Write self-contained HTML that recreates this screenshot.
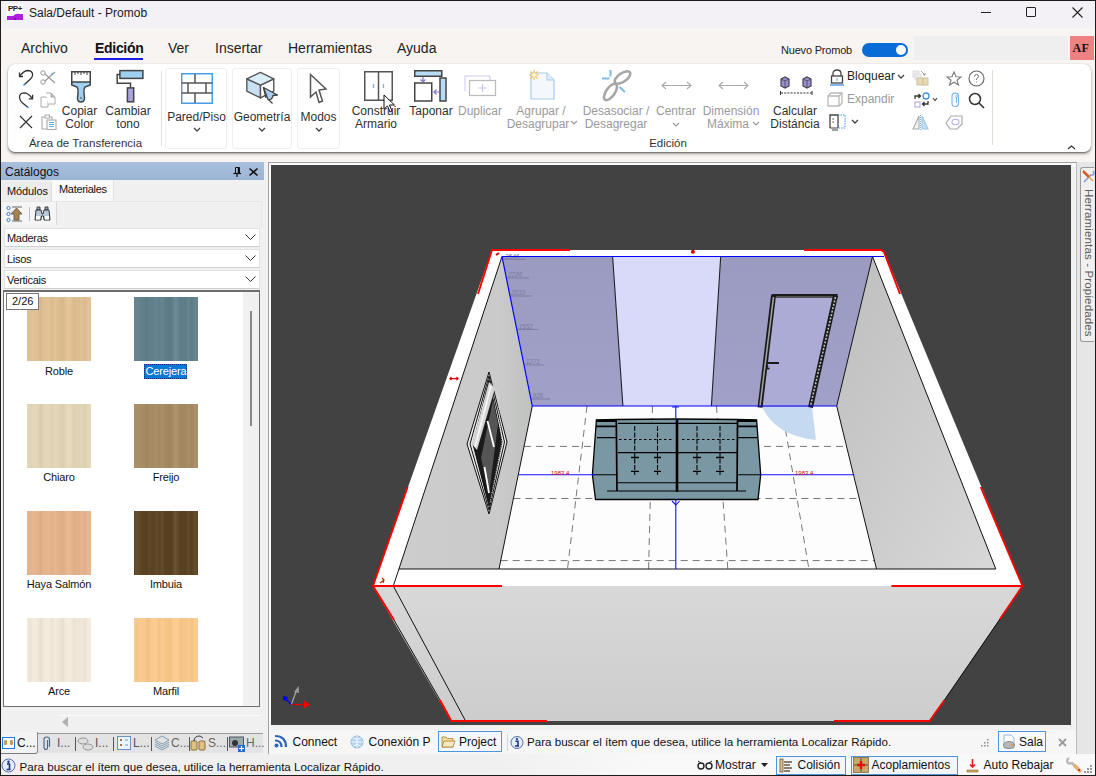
<!DOCTYPE html>
<html><head><meta charset="utf-8">
<style>
*{box-sizing:border-box}
html,body{margin:0;padding:0}
body{width:1096px;height:776px;overflow:hidden;position:relative;background:#f7f4f1;font-family:"Liberation Sans",sans-serif;color:#1a1a1a}
.a{position:absolute}
.t{position:absolute;white-space:nowrap;line-height:1}
.rb{position:absolute;font-size:12px;color:#303030;text-align:center;line-height:13px;white-space:nowrap}
.g{color:#9a9a9a}
svg{position:absolute;overflow:visible}
</style></head><body>
<!-- title bar -->
<div class="a" style="left:0;top:0;width:1096px;height:28px;background:#f3f0f6"></div>
<div class="a" style="left:7px;top:4px;width:16px;height:16px;background:#fff"></div>
<div class="t" style="left:8px;top:5px;font-size:8px;font-weight:bold;color:#222;letter-spacing:-0.5px">PP+</div>
<svg style="left:7px;top:13px" width="16" height="7"><path d="M0 3 L6 3 Q9 0 12 1 L16 1 L16 7 L0 7Z" fill="#b01fe0"/><path d="M7 7 L8 4 L9 7Z" fill="#5a1070"/></svg>
<div class="t" style="left:29px;top:7px;font-size:12px;color:#1a1a1a">Sala/Default - Promob</div>
<!-- window controls -->
<div class="a" style="left:981px;top:12px;width:10px;height:1px;background:#222"></div>
<div class="a" style="left:1026px;top:7px;width:10px;height:10px;border:1px solid #222;border-radius:1px"></div>
<svg style="left:1072px;top:7px" width="11" height="11"><path d="M0.5 0.5 L10.5 10.5 M10.5 0.5 L0.5 10.5" stroke="#222" stroke-width="1.1"/></svg>
<!-- menu bar -->
<div class="t" style="left:21px;top:41px;font-size:14px;color:#222">Archivo</div>
<div class="t" style="left:95px;top:41px;font-size:14px;font-weight:bold;color:#111;letter-spacing:-0.3px">Edición</div>
<div class="a" style="left:94px;top:58px;width:49px;height:2px;background:#1a1ae6"></div>
<div class="t" style="left:168px;top:41px;font-size:14px;color:#222">Ver</div>
<div class="t" style="left:215px;top:41px;font-size:14px;color:#222">Insertar</div>
<div class="t" style="left:288px;top:41px;font-size:14px;color:#222">Herramientas</div>
<div class="t" style="left:397px;top:41px;font-size:14px;color:#222">Ayuda</div>
<div class="t" style="left:781px;top:44.7px;font-size:11px;color:#222;letter-spacing:-0.2px">Nuevo Promob</div>
<div class="a" style="left:862px;top:43px;width:46px;height:14px;background:#0a6cd6;border-radius:7px"></div>
<div class="a" style="left:896px;top:45px;width:10px;height:10px;background:#fff;border-radius:5px"></div>
<div class="a" style="left:914px;top:36px;width:154px;height:24px;background:#f0efef"></div>
<div class="a" style="left:1070px;top:36px;width:24px;height:24px;background:#ee8181"></div>
<div class="t" style="left:1072.5px;top:41.5px;font-family:'Liberation Serif',serif;font-size:12px;font-weight:bold;color:#111;letter-spacing:0.3px">AF</div>
<!-- ribbon panel -->
<div class="a" style="left:8px;top:64px;width:1083px;height:88px;background:#fff;border-radius:7px;box-shadow:0 2px 3px rgba(0,0,0,0.35),0 0.5px 1px rgba(0,0,0,0.3)"></div>
<!-- ===== Catalogos panel ===== -->
<div class="a" style="left:1px;top:162px;width:263px;height:18px;background:linear-gradient(#a9c0dd,#9cb4d4)"></div>
<div class="t" style="left:5px;top:165.5px;font-size:12px;color:#111">Catálogos</div>
<svg style="left:233px;top:167px" width="9" height="10"><path d="M2.5 0.5 H6.5 V6" fill="none" stroke="#111" stroke-width="1"/><path d="M2.5 0.5 V6" stroke="#111" stroke-width="1"/><path d="M5.5 0.5 V6" stroke="#111" stroke-width="1.5"/><path d="M0.5 6.5 H8" stroke="#111" stroke-width="1.2"/><path d="M4 7 V10" stroke="#111" stroke-width="1.2"/></svg>
<svg style="left:249px;top:168px" width="9" height="8"><path d="M0.5 0.5 L8.5 7.5 M8.5 0.5 L0.5 7.5" stroke="#111" stroke-width="1.6"/></svg>
<div class="a" style="left:1px;top:180px;width:263px;height:553px;background:#f0f0f0"></div>
<div class="a" style="left:2px;top:182px;width:50px;height:19px;background:#ececec;border-right:1px solid #dcdcdc"></div>
<div class="a" style="left:52px;top:180px;width:62px;height:22px;background:#f9f9f9;border-right:1px solid #e2e2e2"></div>
<div class="t" style="left:7px;top:186px;font-size:11px;color:#111;letter-spacing:-0.1px">Módulos</div>
<div class="t" style="left:59px;top:184px;font-size:11px;color:#111;letter-spacing:-0.3px">Materiales</div>
<div class="a" style="left:2px;top:201px;width:260px;height:26px;background:#f0f0f0;border-top:1px solid #e6e6e6;border-right:1px solid #e6e6e6"></div>
<div class="a" style="left:3px;top:202px;width:54px;height:23px;background:#f5f5f5;border-right:1px solid #d8d8d8"></div>
<svg style="left:6px;top:206px" width="17" height="16"><circle cx="2.5" cy="2" r="1.6" fill="#fff" stroke="#2a6cc8" stroke-width="0.9"/><circle cx="2.5" cy="8" r="1.6" fill="#fff" stroke="#2a6cc8" stroke-width="0.9"/><circle cx="2.5" cy="14" r="1.6" fill="#fff" stroke="#2a6cc8" stroke-width="0.9"/><path d="M6 1 H16 M6 15 H16" stroke="#666"/><path d="M10.5 2 L16 8 H13 V14 H8 V8 H5Z" fill="#a9824e" stroke="#554" stroke-width="0.8"/></svg>
<div class="a" style="left:29px;top:207px;width:1px;height:14px;background:#bdbdbd"></div>
<svg style="left:34px;top:206px" width="17" height="16"><path d="M3 1 H6 V4 H3Z M11 1 H14 V4 H11Z" fill="#9ab" stroke="#333" stroke-width="0.9"/><path d="M2 4 H7 L8 8 H9 L10 4 H15 L16 14 H10 L9.5 10 H7.5 L7 14 H1Z" fill="#b8c8d8" stroke="#333" stroke-width="1"/><rect x="2" y="10" width="4" height="3.5" fill="#fff"/><rect x="11" y="10" width="4" height="3.5" fill="#fff"/></svg>
<!-- dropdowns -->
<div class="a" style="left:4px;top:228px;width:256px;height:19px;background:#fff;border:1px solid #e2e2e2;border-bottom-color:#cfcfcf"></div>
<div class="a" style="left:4px;top:249px;width:256px;height:19px;background:#fff;border:1px solid #e2e2e2;border-bottom-color:#cfcfcf"></div>
<div class="a" style="left:4px;top:270px;width:256px;height:19px;background:#fff;border:1px solid #e2e2e2;border-bottom-color:#cfcfcf"></div>
<div class="t" style="left:7px;top:232.5px;font-size:11px;color:#111;letter-spacing:-0.3px">Maderas</div>
<div class="t" style="left:7px;top:253.5px;font-size:11px;color:#111;letter-spacing:-0.3px">Lisos</div>
<div class="t" style="left:7px;top:274.5px;font-size:11px;color:#111;letter-spacing:-0.3px">Verticais</div>
<svg style="left:245px;top:234px" width="11" height="7"><path d="M0.5 0.5 L5.5 5.5 L10.5 0.5" fill="none" stroke="#333" stroke-width="1"/></svg>
<svg style="left:245px;top:255px" width="11" height="7"><path d="M0.5 0.5 L5.5 5.5 L10.5 0.5" fill="none" stroke="#333" stroke-width="1"/></svg>
<svg style="left:245px;top:276px" width="11" height="7"><path d="M0.5 0.5 L5.5 5.5 L10.5 0.5" fill="none" stroke="#333" stroke-width="1"/></svg>
<!-- list -->
<div class="a" style="left:3px;top:290px;width:257px;height:417px;background:#fff;border:1px solid #6e6e6e;border-top-width:2px"></div>
<div class="a" style="left:243px;top:292px;width:16px;height:414px;background:#f0f0f0"></div>
<div class="a" style="left:250px;top:311px;width:2px;height:115px;background:#8a8a8a"></div>
<div class="a" style="left:27px;top:297px;width:64px;height:64px;background:#e1c092;background-image:repeating-linear-gradient(90deg,rgba(255,255,255,0) 0px,rgba(255,255,255,0.06) 2px,rgba(255,255,255,0) 5px,rgba(255,255,255,0) 13px),repeating-linear-gradient(90deg,rgba(0,0,0,0) 0px,rgba(0,0,0,0.035) 3px,rgba(0,0,0,0) 6px,rgba(0,0,0,0) 11px),repeating-linear-gradient(90deg,rgba(255,255,255,0) 0px,rgba(255,255,255,0.05) 4px,rgba(255,255,255,0) 9px,rgba(0,0,0,0.025) 14px,rgba(255,255,255,0) 19px)"></div>
<div class="t" style="left:9px;top:365.5px;width:100px;text-align:center;font-size:11px;letter-spacing:-0.15px;color:#111">Roble</div>
<div class="a" style="left:134px;top:297px;width:64px;height:64px;background:#5f7f8b;background-image:repeating-linear-gradient(90deg,rgba(255,255,255,0) 0px,rgba(255,255,255,0.06) 2px,rgba(255,255,255,0) 5px,rgba(255,255,255,0) 13px),repeating-linear-gradient(90deg,rgba(0,0,0,0) 0px,rgba(0,0,0,0.035) 3px,rgba(0,0,0,0) 6px,rgba(0,0,0,0) 11px),repeating-linear-gradient(90deg,rgba(255,255,255,0) 0px,rgba(255,255,255,0.05) 4px,rgba(255,255,255,0) 9px,rgba(0,0,0,0.025) 14px,rgba(255,255,255,0) 19px)"></div>
<div class="a" style="left:144px;top:364px;width:43px;height:15px;background:#0a78d7;border:1px dotted #1a2a6a"></div>
<div class="t" style="left:116px;top:365.5px;width:100px;text-align:center;font-size:11px;letter-spacing:-0.15px;color:#fff">Cerejera</div>
<div class="a" style="left:27px;top:404px;width:64px;height:64px;background:#e4d6b7;background-image:repeating-linear-gradient(90deg,rgba(255,255,255,0) 0px,rgba(255,255,255,0.06) 2px,rgba(255,255,255,0) 5px,rgba(255,255,255,0) 13px),repeating-linear-gradient(90deg,rgba(0,0,0,0) 0px,rgba(0,0,0,0.035) 3px,rgba(0,0,0,0) 6px,rgba(0,0,0,0) 11px),repeating-linear-gradient(90deg,rgba(255,255,255,0) 0px,rgba(255,255,255,0.05) 4px,rgba(255,255,255,0) 9px,rgba(0,0,0,0.025) 14px,rgba(255,255,255,0) 19px)"></div>
<div class="t" style="left:9px;top:472px;width:100px;text-align:center;font-size:11px;letter-spacing:-0.15px;color:#111">Chiaro</div>
<div class="a" style="left:134px;top:404px;width:64px;height:64px;background:#a68a62;background-image:repeating-linear-gradient(90deg,rgba(255,255,255,0) 0px,rgba(255,255,255,0.06) 2px,rgba(255,255,255,0) 5px,rgba(255,255,255,0) 13px),repeating-linear-gradient(90deg,rgba(0,0,0,0) 0px,rgba(0,0,0,0.035) 3px,rgba(0,0,0,0) 6px,rgba(0,0,0,0) 11px),repeating-linear-gradient(90deg,rgba(255,255,255,0) 0px,rgba(255,255,255,0.05) 4px,rgba(255,255,255,0) 9px,rgba(0,0,0,0.025) 14px,rgba(255,255,255,0) 19px)"></div>
<div class="t" style="left:116px;top:472px;width:100px;text-align:center;font-size:11px;letter-spacing:-0.15px;color:#111">Freijo</div>
<div class="a" style="left:27px;top:511px;width:64px;height:64px;background:#e7b38b;background-image:repeating-linear-gradient(90deg,rgba(255,255,255,0) 0px,rgba(255,255,255,0.06) 2px,rgba(255,255,255,0) 5px,rgba(255,255,255,0) 13px),repeating-linear-gradient(90deg,rgba(0,0,0,0) 0px,rgba(0,0,0,0.035) 3px,rgba(0,0,0,0) 6px,rgba(0,0,0,0) 11px),repeating-linear-gradient(90deg,rgba(255,255,255,0) 0px,rgba(255,255,255,0.05) 4px,rgba(255,255,255,0) 9px,rgba(0,0,0,0.025) 14px,rgba(255,255,255,0) 19px)"></div>
<div class="t" style="left:9px;top:579px;width:100px;text-align:center;font-size:11px;letter-spacing:-0.15px;color:#111">Haya Salmón</div>
<div class="a" style="left:134px;top:511px;width:64px;height:64px;background:#5a4220;background-image:repeating-linear-gradient(90deg,rgba(255,255,255,0) 0px,rgba(255,255,255,0.06) 2px,rgba(255,255,255,0) 5px,rgba(255,255,255,0) 13px),repeating-linear-gradient(90deg,rgba(0,0,0,0) 0px,rgba(0,0,0,0.035) 3px,rgba(0,0,0,0) 6px,rgba(0,0,0,0) 11px),repeating-linear-gradient(90deg,rgba(255,255,255,0) 0px,rgba(255,255,255,0.05) 4px,rgba(255,255,255,0) 9px,rgba(0,0,0,0.025) 14px,rgba(255,255,255,0) 19px)"></div>
<div class="t" style="left:116px;top:579px;width:100px;text-align:center;font-size:11px;letter-spacing:-0.15px;color:#111">Imbuia</div>
<div class="a" style="left:27px;top:618px;width:64px;height:64px;background:#f3eadb;background-image:repeating-linear-gradient(90deg,rgba(255,255,255,0) 0px,rgba(255,255,255,0.06) 2px,rgba(255,255,255,0) 5px,rgba(255,255,255,0) 13px),repeating-linear-gradient(90deg,rgba(0,0,0,0) 0px,rgba(0,0,0,0.035) 3px,rgba(0,0,0,0) 6px,rgba(0,0,0,0) 11px),repeating-linear-gradient(90deg,rgba(255,255,255,0) 0px,rgba(255,255,255,0.05) 4px,rgba(255,255,255,0) 9px,rgba(0,0,0,0.025) 14px,rgba(255,255,255,0) 19px)"></div>
<div class="t" style="left:9px;top:686px;width:100px;text-align:center;font-size:11px;letter-spacing:-0.15px;color:#111">Arce</div>
<div class="a" style="left:134px;top:618px;width:64px;height:64px;background:#fbc98b;background-image:repeating-linear-gradient(90deg,rgba(255,255,255,0) 0px,rgba(255,255,255,0.06) 2px,rgba(255,255,255,0) 5px,rgba(255,255,255,0) 13px),repeating-linear-gradient(90deg,rgba(0,0,0,0) 0px,rgba(0,0,0,0.035) 3px,rgba(0,0,0,0) 6px,rgba(0,0,0,0) 11px),repeating-linear-gradient(90deg,rgba(255,255,255,0) 0px,rgba(255,255,255,0.05) 4px,rgba(255,255,255,0) 9px,rgba(0,0,0,0.025) 14px,rgba(255,255,255,0) 19px)"></div>
<div class="t" style="left:116px;top:686px;width:100px;text-align:center;font-size:11px;letter-spacing:-0.15px;color:#111">Marfil</div>
<div class="a" style="left:6px;top:293px;width:33px;height:17px;background:#fff;border:1px solid #777"></div>
<div class="t" style="left:12px;top:296px;font-size:11px;color:#111">2/26</div>
<!-- horizontal scroll -->
<div class="a" style="left:60px;top:715px;width:200px;height:1px;background:#fcfcfc"></div>
<svg style="left:62px;top:717px" width="7" height="10"><path d="M6 0 V10 L0 5Z" fill="#b0b0b0"/></svg>
<!-- bottom tabs -->
<div class="a" style="left:1px;top:732px;width:263px;height:22px;background:#f0f0f0"></div>
<div class="a" style="left:37px;top:733px;width:226px;height:20px;background:#e3e3e3;border-top:1px solid #9a9a9a"></div>
<div class="a" style="left:1px;top:732px;width:37px;height:22px;background:#f3f3f3;border-right:1px solid #8a8a8a;border-bottom:1px solid #7a7a7a;border-bottom-right-radius:3px"></div>
<div class="a" style="left:2px;top:737px;width:13px;height:12px;border:1.5px solid #1a7ae8;background:#fafcff"></div>
<div class="a" style="left:4px;top:740px;width:3px;height:5px;background:#c09a60;border-radius:1px"></div>
<div class="a" style="left:10px;top:740px;width:3px;height:5px;background:#c09a60;border-radius:1px"></div>
<div class="t" style="left:17px;top:737px;font-size:12px;color:#111">C...</div>
<svg style="left:42px;top:736px" width="9" height="15"><path d="M5.5 4 V11 Q5.5 13.5 4 13.5 Q2 13.5 2 11 V3.5 Q2 1 4.5 1 Q7.5 1 7.5 3.5 V11" fill="none" stroke="#4a6c8c" stroke-width="1.2"/></svg>
<div class="t" style="left:57px;top:737px;font-size:12px;color:#555">I...</div>
<div class="a" style="left:75px;top:737px;width:1px;height:14px;background:#555"></div>
<svg style="left:77px;top:736px" width="16" height="15"><ellipse cx="6" cy="5" rx="5" ry="3" fill="#ddd" stroke="#999"/><ellipse cx="11" cy="11" rx="5" ry="3" fill="#ddd" stroke="#999"/></svg>
<div class="t" style="left:95px;top:737px;font-size:12px;color:#555">I...</div>
<div class="a" style="left:113px;top:737px;width:1px;height:14px;background:#555"></div>
<svg style="left:117px;top:736px" width="14" height="14"><rect x="0.5" y="0.5" width="13" height="13" fill="#eef4fb" stroke="#6f8fc8"/><path d="M3 4 H5 M3 9 H5" stroke="#a07a40" stroke-width="2"/><path d="M8 4 H11 M8 9 H11" stroke="#6f8fc8"/></svg>
<div class="t" style="left:133px;top:737px;font-size:12px;color:#555">L...</div>
<div class="a" style="left:151px;top:737px;width:1px;height:14px;background:#555"></div>
<svg style="left:154px;top:735px" width="16" height="16"><path d="M8 1 L15 5 L8 9 L1 5Z M1 7 L8 11 L15 7 M1 9 L8 13 L15 9 M1 11 L8 15 L15 11" fill="none" stroke="#7f9fb8" stroke-width="1"/></svg>
<div class="t" style="left:171px;top:737px;font-size:12px;color:#666">C...</div>
<div class="a" style="left:189px;top:737px;width:1px;height:14px;background:#555"></div>
<svg style="left:190px;top:735px" width="18" height="16"><rect x="1" y="6" width="6" height="9" rx="1" fill="#e0c080" stroke="#8a7040"/><rect x="9" y="6" width="6" height="9" rx="1" fill="#e0c080" stroke="#8a7040"/><path d="M4 6 Q4 1 10 1 L13 3" fill="none" stroke="#333"/></svg>
<div class="t" style="left:208px;top:737px;font-size:12px;color:#666">S...</div>
<div class="a" style="left:227px;top:737px;width:1px;height:14px;background:#555"></div>
<svg style="left:229px;top:736px" width="17" height="16"><rect x="0.5" y="1" width="14" height="10" fill="#9aa" stroke="#556"/><circle cx="6" cy="7" r="3" fill="#333"/><rect x="9" y="9" width="7" height="7" fill="#2a6cc8"/><path d="M12.5 10 V15 M10 12.5 H15" stroke="#fff" stroke-width="1.2"/></svg>
<div class="t" style="left:246px;top:737px;font-size:12px;color:#666">H...</div>
<!-- status bar -->
<div class="a" style="left:1px;top:754px;width:1094px;height:21px;background:linear-gradient(90deg,#efefef 0%,#f0f0f0 45%,#f9f9f9 60%,#f9f9f9 100%)"></div>
<div class="a" style="left:268px;top:753px;width:809px;height:1px;background:#b8b8b8"></div>
<svg style="left:1px;top:758px" width="15" height="15"><circle cx="7.5" cy="7.5" r="6.5" fill="#e4eef8" stroke="#5a6ea8" stroke-width="1"/><circle cx="7.5" cy="3.8" r="1.2" fill="#1a2c8a"/><path d="M6 6 H8.5 V11.5 H9.5 M5.5 11.5 H9.5" stroke="#1a2c8a" stroke-width="1.6" fill="none"/></svg>
<div class="t" style="left:19.5px;top:760.5px;font-size:11.6px;color:#111">Para buscar el ítem que desea, utilice la herramienta Localizar Rápido.</div>
<svg style="left:697px;top:760px" width="17" height="10"><circle cx="4" cy="6" r="3" fill="none" stroke="#222" stroke-width="1.4"/><circle cx="12" cy="6" r="3" fill="none" stroke="#222" stroke-width="1.4"/><path d="M1 1 L4 3 M15 1 L12 3" stroke="#222"/></svg>
<div class="t" style="left:715px;top:759px;font-size:12px;color:#111">Mostrar</div>
<svg style="left:761px;top:763px" width="7" height="4"><path d="M0 0 H7 L3.5 4Z" fill="#222"/></svg>
<div class="a" style="left:776px;top:756px;width:70px;height:19px;border:1px solid #4e94de;background:#f2f6fb"></div>
<svg style="left:779px;top:758px" width="14" height="15"><rect x="1" y="1" width="3" height="13" fill="#d9c090" stroke="#6a5a3a" stroke-width="0.8"/><path d="M5 4 H13 M5 7 H11 M5 10 H13 M5 13 H11" stroke="#6a5a3a" stroke-width="1.3"/></svg>
<div class="t" style="left:797.5px;top:759px;font-size:12px;color:#111">Colisión</div>
<div class="a" style="left:851px;top:756px;width:107px;height:19px;border:1px solid #4e94de;background:#f2f6fb"></div>
<svg style="left:853px;top:757px" width="16" height="16"><rect x="0.5" y="0.5" width="7" height="7" fill="#c9a86a" stroke="#7a6a3a" stroke-width="0.8"/><rect x="8.5" y="0.5" width="7" height="7" fill="#c9a86a" stroke="#7a6a3a" stroke-width="0.8"/><rect x="0.5" y="8.5" width="7" height="7" fill="#c9a86a" stroke="#7a6a3a" stroke-width="0.8"/><rect x="8.5" y="8.5" width="7" height="7" fill="#c9a86a" stroke="#7a6a3a" stroke-width="0.8"/><path d="M8 4 V12 M4 8 H12" stroke="#e01010" stroke-width="2.4"/></svg>
<div class="t" style="left:871.5px;top:759px;font-size:12px;color:#111">Acoplamientos</div>
<svg style="left:966px;top:758px" width="13" height="15"><path d="M6.5 1 V9 M4 6.5 L6.5 9 L9 6.5" fill="none" stroke="#e02020" stroke-width="1.6"/><path d="M1 12 H12 V14 H1Z" fill="#d9a860" stroke="#8a6a3a" stroke-width="0.6"/></svg>
<div class="t" style="left:983.5px;top:759px;font-size:12px;color:#111">Auto Rebajar</div>
<svg style="left:1066px;top:757px" width="17" height="16"><path d="M3 1 Q0 3 2 6 Q4 7 6 6 L13 13" fill="none" stroke="#bbb" stroke-width="2.5"/><path d="M8 8 L15 15" stroke="#e8b070" stroke-width="3.5"/><circle cx="13" cy="13" r="1" fill="#e01010"/></svg>
<svg style="left:1083px;top:764px" width="10" height="10"><g fill="#999"><rect x="7" y="1" width="2" height="2"/><rect x="4" y="4" width="2" height="2"/><rect x="7" y="4" width="2" height="2"/><rect x="1" y="7" width="2" height="2"/><rect x="4" y="7" width="2" height="2"/><rect x="7" y="7" width="2" height="2"/></g></svg>
<!-- ===== viewport frame ===== -->
<div class="a" style="left:264px;top:162px;width:4px;height:592px;background:#f0f0f0"></div>
<div class="a" style="left:268px;top:162px;width:809px;height:592px;background:#f0f0f0;border-left:1px solid #a0a0a0;border-top:1px solid #a0a0a0;border-right:1px solid #bdbdbd"></div>
<div class="a" style="left:269px;top:163px;width:807px;height:4px;background:#fafafa"></div>
<div class="a" style="left:269px;top:163px;width:2px;height:567px;background:#fafafa"></div>
<div class="a" style="left:1077px;top:162px;width:18px;height:592px;background:#e6e6e6"></div>
<div class="a" style="left:1080px;top:167px;width:14px;height:175px;background:#f0f0f0;border:1px solid #9a9a9a;border-right:none;border-radius:3px 0 0 3px"></div>
<svg style="left:1082px;top:170px" width="13" height="14"><path d="M11 1 Q13 3 11 5 L9 5 L2 12" fill="none" stroke="#8a9ad8" stroke-width="1.5"/><path d="M1 1 L7 7" stroke="#d85a2a" stroke-width="2.5"/><path d="M7 7 L11 11" stroke="#e0a040" stroke-width="1.5"/></svg>
<div class="t" style="left:1081px;top:188.5px;font-size:11.5px;color:#5c5c5c;transform-origin:0 0;transform:translate(12.5px,0) rotate(90deg);letter-spacing:0.15px">Herramientas - Propiedades</div>
<!-- doc tab row -->
<div class="a" style="left:269px;top:730px;width:807px;height:24px;background:#f6f6f6"></div>
<svg style="left:274px;top:735px" width="14" height="13"><circle cx="2.5" cy="10.5" r="2" fill="#2c66b8"/><path d="M1 5.5 Q7.5 5.5 7.5 12 M1 1 Q12 1 12 12" fill="none" stroke="#2c66b8" stroke-width="2.2"/></svg>
<div class="t" style="left:292.5px;top:736px;font-size:12px;color:#111">Connect</div>
<svg style="left:350px;top:735px" width="14" height="14"><circle cx="7" cy="7" r="6" fill="#b4d4f0" stroke="#8ab8e0"/><path d="M1 7 H13 M7 1 V13 M3 3 Q7 6 11 3 M3 11 Q7 8 11 11" fill="none" stroke="#fff" stroke-width="0.8"/></svg>
<div class="t" style="left:368.5px;top:736px;font-size:12px;color:#111">Conexión P</div>
<div class="a" style="left:438px;top:731px;width:64px;height:21px;border:1px solid #4e94de;background:#f4f8fc"></div>
<svg style="left:441px;top:735px" width="15" height="13"><path d="M1 2 H5 L6.5 3.5 H12 V12 H1Z" fill="#f4dca0" stroke="#b08a40" stroke-width="0.9"/><path d="M3 6 H14 L12 12 H1Z" fill="#f8e8c0" stroke="#b08a40" stroke-width="0.9"/></svg>
<div class="t" style="left:459px;top:736px;font-size:12px;color:#111">Project</div>
<div class="a" style="left:507px;top:734px;width:1px;height:17px;background:#d4d4d4"></div>
<svg style="left:510px;top:735px" width="14" height="15"><circle cx="7" cy="7.5" r="6" fill="#e4eef8" stroke="#5a6ea8" stroke-width="1"/><circle cx="7" cy="4" r="1.1" fill="#1a2c8a"/><path d="M5.5 6.3 H8 V11 H9 M5 11 H9" stroke="#1a2c8a" stroke-width="1.5" fill="none"/></svg>
<div class="t" style="left:527px;top:736px;font-size:11.6px;color:#111">Para buscar el ítem que desea, utilice la herramienta Localizar Rápido.</div>
<svg style="left:980px;top:738px" width="10" height="10"><g fill="#888"><rect x="7" y="1" width="1.5" height="1.5"/><rect x="4" y="4" width="1.5" height="1.5"/><rect x="7" y="4" width="1.5" height="1.5"/><rect x="1" y="7" width="1.5" height="1.5"/><rect x="4" y="7" width="1.5" height="1.5"/><rect x="7" y="7" width="1.5" height="1.5"/></g></svg>
<div class="a" style="left:998px;top:731px;width:48px;height:21px;border:1px solid #4e94de;background:#f8fafd"></div>
<svg style="left:1001px;top:734px" width="15" height="16"><path d="M3 1 H10 L13 4 V14 H3Z" fill="#fff" stroke="#8ab0d8" stroke-width="0.9"/><ellipse cx="8" cy="11" rx="5.5" ry="3.5" fill="#b8b8b8" stroke="#777" stroke-width="0.8"/><circle cx="11" cy="11" r="1.5" fill="#d8a060"/></svg>
<div class="t" style="left:1019px;top:736px;font-size:12px;color:#111">Sala</div>
<svg style="left:1058px;top:738px" width="9" height="9"><path d="M1 1 L8 8 M8 1 L1 8" stroke="#9a9a9a" stroke-width="1.8"/></svg>
<!-- ===== ribbon: Area de transferencia ===== -->
<svg style="left:18px;top:69px" width="17" height="18"><path d="M1.5 3.5 V7.5 H5" fill="none" stroke="#333" stroke-width="1.3"/><path d="M1.8 7.2 Q6 1.5 10 1.5 Q14.6 1.8 14.6 5.8 Q14.6 8 12.5 10 L6.5 15.5" fill="none" stroke="#333" stroke-width="1.3"/><path d="M7 15 L5.5 16.5" stroke="#3a8ee6" stroke-width="1.6"/></svg>
<svg style="left:18px;top:91px" width="17" height="18"><path d="M14.6 3.8 V7.8 H10.8" fill="none" stroke="#333" stroke-width="1.3"/><path d="M14.3 7.5 Q10 1.8 6 1.8 Q1.5 2 1.5 6.3 Q1.5 9 4 11.5 L9.5 16" fill="none" stroke="#333" stroke-width="1.3"/><path d="M9 15.5 L10.5 16.8" stroke="#3a8ee6" stroke-width="1.6"/></svg>
<svg style="left:19px;top:115px" width="14" height="14"><path d="M1 1 L13 13 M13 1 L1 13" stroke="#333" stroke-width="1.2"/></svg>
<svg style="left:40px;top:70px" width="16" height="15"><circle cx="3" cy="3" r="2.2" fill="none" stroke="#999" stroke-width="1"/><circle cx="3" cy="12" r="2.2" fill="none" stroke="#999" stroke-width="1"/><path d="M5 4 L15 13 M5 11 L15 2" stroke="#999" stroke-width="1.2"/><path d="M11 5 L13 3" stroke="#6aaee8" stroke-width="1.2"/></svg>
<svg style="left:40px;top:92px" width="16" height="16"><path d="M1 5 L6 5 L8 7 L8 15 L1 15Z" fill="#fff" stroke="#aaa"/><path d="M6 1 L11 1 L15 5 L15 12 L8 12" fill="#fff" stroke="#aaa"/><path d="M11 1 L11 5 L15 5" fill="#bbb" stroke="#aaa"/></svg>
<svg style="left:41px;top:114px" width="16" height="16"><path d="M1 3 H11 V15 H1Z" fill="#fff" stroke="#aaa" stroke-width="1.1"/><rect x="4" y="1" width="4.5" height="3" fill="#fff" stroke="#aaa"/><rect x="6" y="6" width="9" height="9.5" fill="#fff" stroke="#aaa" stroke-width="1.1"/><path d="M8 8.5 H13 M8 10.5 H13 M8 12.5 H13" stroke="#6aaee8" stroke-width="1"/></svg>
<svg style="left:71px;top:71px" width="20" height="32"><rect x="0.75" y="0.75" width="18.5" height="11" fill="#fff" stroke="#444" stroke-width="1.5"/><path d="M4 1 V4 M7 1 V3 M10 1 V4 M13 1 V3 M16 1 V4" stroke="#444" stroke-width="1"/><path d="M0.75 11 L19.25 11 L19.25 14 L14 16 Q12.5 18 13 22 L13.5 27 Q13.5 31 10 31 Q6.5 31 6.5 27 L7 22 Q7.5 18 6 16 L0.75 14Z" fill="#9fd0f0" stroke="#444" stroke-width="1.5"/><path d="M9 27 H11" stroke="#444"/></svg>
<svg style="left:116px;top:69px" width="28" height="34"><rect x="3.9" y="1.6" width="23" height="7.8" fill="#9fd0f0" stroke="#444" stroke-width="1.5"/><path d="M3.9 5.5 H1.2 V14.2 H14.5 V18.9" fill="none" stroke="#444" stroke-width="1.5"/><rect x="11.4" y="18.9" width="6.3" height="13.9" fill="#a9a3e0" stroke="#444" stroke-width="1.5"/></svg>
<div class="rb" style="left:-0.5px;top:105px;width:160px">Copiar<br>Color</div>
<div class="rb" style="left:48px;top:105px;width:160px">Cambiar<br>tono</div>
<div class="rb" style="left:5.5px;top:136.5px;width:160px;color:#333;font-size:11.5px">Área de Transferencia</div>
<div class="a" style="left:161px;top:71px;width:1px;height:75px;background:#dedede"></div>
<!-- ===== Pared/Piso, Geometria, Modos ===== -->
<div class="a" style="left:165px;top:68px;width:62px;height:81px;border:1px solid #f1eeee;border-radius:3px"></div>
<div class="a" style="left:232px;top:68px;width:60px;height:81px;border:1px solid #f1eeee;border-radius:3px"></div>
<div class="a" style="left:297px;top:68px;width:43px;height:81px;border:1px solid #f1eeee;border-radius:3px"></div>
<svg style="left:181px;top:73px" width="32" height="31"><rect x="0.75" y="0.75" width="30.5" height="29.5" fill="#fff" stroke="#4a9be8" stroke-width="1.5"/><path d="M1 10 H31 M1 20 H31 M14 1 V10 M7 10 V20 M25 10 V20 M14 20 V30" stroke="#555" stroke-width="1.5"/></svg>
<svg style="left:245px;top:72px" width="34" height="33"><path d="M1.8 6.8 L15.5 13.2 L15.5 25.9 L1.8 19.1Z" fill="#c8e0f6" stroke="#555" stroke-width="1.4" stroke-linejoin="round"/><path d="M15.5 13.2 L28.8 6.8 L28.8 19.1 L15.5 25.9Z" fill="#fff" stroke="#555" stroke-width="1.4" stroke-linejoin="round"/><path d="M1.8 6.8 L15.5 0.4 L28.8 6.8 L15.5 13.2Z" fill="#d9edfb" stroke="#555" stroke-width="1.4" stroke-linejoin="round"/><path d="M18.5 15.5 L32.5 23 L28 23.5 Q27 28.5 23 27.5 Z" fill="#a9cdf0" stroke="#444" stroke-width="1.3" stroke-linejoin="round"/><path d="M18.5 15.5 L21 26 M23.5 27.5 L27.5 31.5" stroke="#444" stroke-width="1.3"/></svg>
<svg style="left:309px;top:73px" width="19" height="31"><path d="M1.5 1.5 L17 16 L10 17 L13.5 28 L10 29.5 L7 19 L1.5 24Z" fill="#fff" stroke="#555" stroke-width="1.5"/></svg>
<div class="rb" style="left:116.5px;top:111px;width:160px">Pared/Piso</div>
<div class="rb" style="left:182px;top:111px;width:160px">Geometría</div>
<div class="rb" style="left:238.5px;top:111px;width:160px">Modos</div>
<svg style="left:193px;top:127px" width="8" height="5"><path d="M1 1 L4 4 L7 1" fill="none" stroke="#444" stroke-width="1.3"/></svg>
<svg style="left:258px;top:127px" width="8" height="5"><path d="M1 1 L4 4 L7 1" fill="none" stroke="#444" stroke-width="1.3"/></svg>
<svg style="left:315px;top:127px" width="8" height="5"><path d="M1 1 L4 4 L7 1" fill="none" stroke="#444" stroke-width="1.3"/></svg>
<!-- ===== Edicion group ===== -->
<svg style="left:364px;top:71px" width="29" height="30"><rect x="0.75" y="0.75" width="27.5" height="28.5" fill="#fff" stroke="#555" stroke-width="1.5"/><path d="M14.5 1 V29" stroke="#555" stroke-width="1.5"/><path d="M9.5 13 V17 M19.5 13 V17" stroke="#8aa8e8" stroke-width="1.3"/></svg>
<svg style="left:383px;top:94px" width="13" height="19"><path d="M1 1 L1 15 L4.5 12 L7 18 L9 17 L6.5 11 L11.5 11Z" fill="#fff" stroke="#111" stroke-width="1"/></svg>
<svg style="left:414px;top:70px" width="33" height="32"><rect x="0.75" y="0.75" width="27" height="5.5" fill="#b7dcf5" stroke="#444" stroke-width="1.5"/><rect x="0.75" y="13" width="17" height="18" fill="#fff" stroke="#444" stroke-width="1.5"/><rect x="26" y="8" width="6" height="23" fill="#b7dcf5" stroke="#444" stroke-width="1.5"/><path d="M9 7 V12 M6.5 9.5 L9 12 L11.5 9.5" fill="none" stroke="#8870d8" stroke-width="1.2"/><path d="M20 22 H25 M22.5 19.5 L20 22 L22.5 24.5" fill="none" stroke="#8870d8" stroke-width="1.2"/></svg>
<svg style="left:464px;top:75px" width="33" height="22"><path d="M1 16 V1 H26 V5" fill="none" stroke="#c9c9f0" stroke-width="1"/><rect x="5.5" y="5.5" width="26" height="15" fill="#fff" stroke="#bbb" stroke-width="1.2"/><path d="M18.5 9 V17 M14.5 13 H22.5" stroke="#c6c6ee" stroke-width="1.2"/></svg>
<svg style="left:526px;top:70px" width="30" height="30"><path d="M5 3 H21 L28 10 V29 H5Z" fill="#f4f8fd" stroke="#a9c9ec" stroke-width="1.2"/><path d="M21 3 V10 H28" fill="#e4eef8" stroke="#a9c9ec" stroke-width="1"/><path d="M8 0 V10 M3 5 H13 M4.5 1.5 L11.5 8.5 M11.5 1.5 L4.5 8.5" stroke="#f0c060" stroke-width="1.2"/><circle cx="8" cy="5" r="2" fill="#fff8d0"/></svg>
<svg style="left:600px;top:69px" width="33" height="33"><ellipse cx="22.5" cy="8.5" rx="9" ry="4.2" transform="rotate(-35 22.5 8.5)" fill="none" stroke="#a6a6a6" stroke-width="2.6"/><ellipse cx="10.5" cy="23" rx="9.5" ry="4.3" transform="rotate(-55 10.5 23)" fill="none" stroke="#a6a6a6" stroke-width="2.6"/><path d="M2 9.5 H9.5 M10.5 1 V7.5 M19.5 18 L25 23" stroke="#76bdec" stroke-width="2"/></svg>
<svg style="left:661px;top:81px" width="31" height="9"><path d="M1 4.5 H30 M5 1 L1 4.5 L5 8 M26 1 L30 4.5 L26 8" fill="none" stroke="#aaa" stroke-width="1.1"/></svg>
<svg style="left:718px;top:81px" width="31" height="9"><path d="M1 4.5 H30 M5 1 L1 4.5 L5 8 M26 1 L30 4.5 L26 8" fill="none" stroke="#aaa" stroke-width="1.1"/></svg>
<svg style="left:779px;top:76px" width="35" height="20"><path d="M2 3 L6 1 L10 3 L10 10 L6 12 L2 10Z" fill="#9b8fd8" stroke="#444" stroke-width="1.2"/><path d="M2 3 L6 5 L10 3 M6 5 V12" fill="none" stroke="#444" stroke-width="0.8"/><path d="M24 3 L28 1 L32 3 L32 10 L28 12 L24 10Z" fill="#9b8fd8" stroke="#444" stroke-width="1.2"/><path d="M24 3 L28 5 L32 3 M28 5 V12" fill="none" stroke="#444" stroke-width="0.8"/><path d="M1.5 15 V19 M33 15 V19" stroke="#333"/><path d="M2 17 H33" stroke="#333" stroke-dasharray="2 1.2"/></svg>
<div class="rb" style="left:296px;top:105px;width:160px">Construir<br>Armario</div>
<div class="rb" style="left:351px;top:105px;width:160px">Taponar</div>
<div class="rb g" style="left:400px;top:105px;width:160px">Duplicar</div>
<div class="rb g" style="left:461px;top:105px;width:160px">Agrupar /</div>
<div class="rb g" style="left:458px;top:118px;width:160px">Desagrupar</div>
<div class="rb g" style="left:536px;top:105px;width:160px">Desasociar /</div>
<div class="rb g" style="left:536px;top:118px;width:160px">Desagregar</div>
<div class="rb g" style="left:596px;top:105px;width:160px">Centrar</div>
<div class="rb g" style="left:651px;top:105px;width:160px">Dimensión</div>
<div class="rb g" style="left:648px;top:118px;width:160px">Máxima</div>
<div class="rb" style="left:715px;top:105px;width:160px">Calcular<br>Distáncia</div>
<svg style="left:570px;top:120px" width="8" height="5"><path d="M1 1 L4 4 L7 1" fill="none" stroke="#999" stroke-width="1.2"/></svg>
<svg style="left:672px;top:122px" width="8" height="5"><path d="M1 1 L4 4 L7 1" fill="none" stroke="#999" stroke-width="1.2"/></svg>
<svg style="left:752px;top:121px" width="8" height="5"><path d="M1 1 L4 4 L7 1" fill="none" stroke="#999" stroke-width="1.2"/></svg>
<div class="rb" style="left:588px;top:136.5px;width:160px;color:#333;font-size:11.5px">Edición</div>
<!-- small buttons -->
<svg style="left:829px;top:69px" width="16" height="17"><path d="M4 7 V4.5 Q4 1 8 1 Q12 1 12 4.5 V7" fill="none" stroke="#444" stroke-width="1.3"/><rect x="2.5" y="7" width="11" height="7" fill="#fff" stroke="#444" stroke-width="1.3"/><path d="M8 9 V12" stroke="#7ab6ec" stroke-width="1.3"/><path d="M1 16 H15" stroke="#3a8ee6" stroke-width="1.3"/></svg>
<div class="t" style="left:847px;top:70px;font-size:12px;color:#222">Bloquear</div>
<svg style="left:897px;top:74px" width="8" height="5"><path d="M1 1 L4 4 L7 1" fill="none" stroke="#444" stroke-width="1.3"/></svg>
<svg style="left:827px;top:92px" width="16" height="15"><path d="M1 4 L4 1 H15 V11 L12 14 H1Z" fill="none" stroke="#b9b9b9" stroke-width="1.3"/><path d="M1 4 H12 V14 M12 4 L15 1" fill="none" stroke="#b9b9b9" stroke-width="1.3"/></svg>
<div class="t g" style="left:847px;top:92.5px;font-size:12px">Expandir</div>
<svg style="left:829px;top:114px" width="17" height="16"><path d="M1 14 V1 H9 V14" fill="#fff" stroke="#444" stroke-width="1.3"/><path d="M9 1 H16 V14 H9" fill="none" stroke="#4a9be8" stroke-width="1" stroke-dasharray="1.5 1"/><path d="M3.5 5 H5 M3.5 8 H5" stroke="#333" stroke-width="1.2"/><path d="M1 14 H9 M3 16 H9" stroke="#444" stroke-width="1"/></svg>
<svg style="left:851px;top:119px" width="8" height="5"><path d="M1 1 L4 4 L7 1" fill="none" stroke="#444" stroke-width="1.3"/></svg>
<svg style="left:912px;top:70px" width="17" height="16"><rect x="1" y="1" width="6" height="6" fill="#eee" stroke="#ddd"/><rect x="3" y="4" width="6" height="6" fill="#eee" stroke="#ddd"/><rect x="5" y="8" width="6" height="7" fill="#e8d9b4" stroke="#cfc2a0"/><rect x="11" y="8" width="5" height="7" fill="#e8d9b4" stroke="#cfc2a0"/><path d="M9 1 L13 5 M11 5 H13 V3" fill="none" stroke="#9a9a9a"/></svg>
<svg style="left:914px;top:92px" width="24" height="16"><path d="M1 7 V4 H6 M4.5 2 L6.5 4 L4.5 6" fill="none" stroke="#333" stroke-width="1.3"/><circle cx="12" cy="4" r="3" fill="none" stroke="#3a8ee6" stroke-width="1.3"/><rect x="1" y="10" width="5" height="5" fill="none" stroke="#a9a3e0"/><path d="M14 9 V12 H9 M10.5 10 L8.5 12 L10.5 14" fill="none" stroke="#333" stroke-width="1.3"/><path d="M19 6 L21 8.5 L23 6" fill="none" stroke="#444" stroke-width="1.2"/></svg>
<svg style="left:912px;top:115px" width="17" height="15"><path d="M7 1 V14 H1Z" fill="#f4f4f4" stroke="#aaa" stroke-width="1.1"/><path d="M10 1 V14 H16Z" fill="#bfe0f5" stroke="#9cc8ea" stroke-width="1.1"/><path d="M8.5 0 V15" stroke="#7ab6ec" stroke-dasharray="1 1"/></svg>
<svg style="left:946px;top:71px" width="16" height="15"><path d="M8 1 L10 5.8 L15 6 L11 9.2 L12.5 14 L8 11.2 L3.5 14 L5 9.2 L1 6 L6 5.8Z" fill="none" stroke="#7a7a7a" stroke-width="1.1"/></svg>
<svg style="left:968px;top:70px" width="17" height="17"><circle cx="8.5" cy="8.5" r="7.5" fill="none" stroke="#666" stroke-width="1.1"/><path d="M6.5 6.5 Q6.5 4.5 8.5 4.5 Q10.5 4.5 10.5 6.3 Q10.5 7.8 8.5 8.8 V10" fill="none" stroke="#777" stroke-width="1"/><circle cx="8.5" cy="12" r="0.6" fill="#777"/></svg>
<svg style="left:950px;top:92px" width="11" height="16"><path d="M6.5 5 V11 M8.5 4 V11.5 Q8.5 14.5 5.5 14.5 Q2 14.5 2 11.5 V4.5 Q2 1.2 5 1.2 Q8.5 1.2 8.5 4" fill="none" stroke="#7cb8ea" stroke-width="1.2"/><circle cx="6.5" cy="4.5" r="1" fill="none" stroke="#7cb8ea"/></svg>
<svg style="left:968px;top:92px" width="17" height="17"><circle cx="7" cy="7" r="5.5" fill="none" stroke="#333" stroke-width="1.5"/><path d="M11 11 L16 16" stroke="#333" stroke-width="1.6"/></svg>
<svg style="left:945px;top:115px" width="18" height="15"><path d="M1 8 L6 1 H17 V9 L12 14 H5Z" fill="none" stroke="#aaa" stroke-width="1.2"/><ellipse cx="10.5" cy="7" rx="3.5" ry="2.7" fill="none" stroke="#b5b0e8" stroke-width="1.1"/></svg>
<div class="a" style="left:992px;top:70px;width:1px;height:75px;background:#e3ddd8"></div>
<svg style="left:1067px;top:145px" width="9" height="5"><path d="M1 4 L4.5 1 L8 4" fill="none" stroke="#333" stroke-width="1.2"/></svg>
<!-- ===== 3D viewport ===== -->
<svg style="left:0;top:0" width="1096" height="776" viewBox="0 0 1096 776">
<defs>
<clipPath id="vp"><rect x="271" y="165" width="800" height="560"/></clipPath>
<linearGradient id="lw" x1="0" y1="0" x2="1" y2="0"><stop offset="0" stop-color="#cdcdcd"/><stop offset="0.75" stop-color="#c9cac9"/><stop offset="1" stop-color="#c0c2c0"/></linearGradient>
<linearGradient id="rw" x1="0" y1="0" x2="1" y2="1"><stop offset="0" stop-color="#bebebe"/><stop offset="0.5" stop-color="#cbcbcb"/><stop offset="1" stop-color="#d8d8d8"/></linearGradient>
<linearGradient id="fw" x1="0" y1="0" x2="0" y2="1"><stop offset="0" stop-color="#d8d8d8"/><stop offset="1" stop-color="#cdcdcd"/></linearGradient>
<linearGradient id="bw" x1="0" y1="0" x2="0" y2="1"><stop offset="0" stop-color="#9b9bc2"/><stop offset="1" stop-color="#a0a0c8"/></linearGradient>
</defs>
<g clip-path="url(#vp)">
<rect x="271" y="165" width="800" height="560" fill="#424242"/>
<!-- wall tops (white) -->
<polygon points="492,250 881,250 884,252 1022.5,586 373,586" fill="#ffffff"/>
<!-- front wall outer face -->
<polygon points="373,586 1022.5,586 929.6,721 451.3,721" fill="url(#fw)"/>
<!-- floor -->
<polygon points="532.3,406 836.7,406 876.5,569 499,569" fill="#fdfdfd"/>
<!-- left wall inner face -->
<polygon points="502,256.5 532.3,406 499,569 398.9,569" fill="url(#lw)"/>
<!-- right wall inner face -->
<polygon points="872.5,256.5 995.8,569 876.5,569 836.7,406" fill="url(#rw)"/>
<!-- back wall -->
<polygon points="502,256.5 872.5,256.5 836.7,406 532.3,406" fill="url(#bw)"/>
<polygon points="612.6,256.5 720.7,256.5 711.4,406 622.9,406" fill="#d9d9f9"/>
<path d="M612.6,256.5 L622.9,406 M720.7,256.5 L711.4,406" stroke="#222" stroke-width="1.1" fill="none"/>
<!-- height annotations -->
<path d="M504,259.3 H526 M507,278 H529 M510,296 H532 M517.5,329.5 H538 M524.7,365 H544 M531.3,399 H550" stroke="#7c7ca0" stroke-width="0.9" fill="none"/>
<g font-size="6.5" fill="#7a7a9c" font-family="Liberation Sans" font-style="italic"><text x="505" y="258.5">2546</text><text x="508" y="277.2">2286</text><text x="511" y="295.2">2010</text><text x="518.5" y="328.7">1552</text><text x="525.7" y="364.2">1271</text><text x="532.3" y="398.2">926</text></g>
<!-- floor dashed grid -->
<g stroke="#777" stroke-width="1" stroke-dasharray="7 5" fill="none">
<path d="M524,446.4 H846.6 M513.4,498.5 H859.3 M500.7,560.6 H874.5"/>
<path d="M587,406 L567.5,569 M652.5,406 L648.6,569 M716.5,406 L727.8,569 M781.5,406 L808.9,569"/>
</g>
<!-- door swing -->
<path d="M762,407 L812,407 L816,440 Q776,436 762,407Z" fill="#c5daf0"/>
<!-- door -->
<polygon points="775,298 834,298 809,407 762,407" fill="#ababd5"/>
<g fill="none" stroke="#1a1a1a">
<path d="M771.6,296 H837.6" stroke-width="4"/>
<path d="M773,297 H836" stroke-width="1" stroke="#8a8a8a"/>
<path d="M773.5,295.5 L760,407.5" stroke-width="5"/>
<path d="M773.5,297 L760,406" stroke-width="1.6" stroke="#a0a0a0"/>
<path d="M835.5,295.5 L810.5,407.5" stroke-width="5"/>
<path d="M835.5,297 L810.5,406" stroke-width="1.6" stroke="#c0c0c0" stroke-dasharray="2 1.5"/>
<path d="M767,363 H779 M768,365.5 Q765,369 769.5,368.5" stroke-width="1.8"/>
</g>
<!-- structure lines -->
<g fill="none" stroke="#111" stroke-width="1">
<path d="M502,256.5 L393.3,586 L465.6,721"/>
<path d="M872.5,256.5 L995.8,569"/>
<path d="M398.9,569 H995.8"/>
<path d="M872.5,256.5 L836.7,406"/>
<path d="M532.3,406 L499,569"/>
<path d="M836.7,406 L876.5,569"/>
<path d="M394,620 L440,700 M1000,619 L944.5,700"/>
</g>
<g fill="none" stroke="#0000ff" stroke-width="1.2">
<path d="M502,256.5 H884 M502,256.5 L532.3,406 H836.7"/>
</g>
<!-- window on left wall -->
<g stroke-linejoin="miter">
<polygon points="489,372 507,442 489,514 467,444" fill="#e8e8e8" stroke="#111" stroke-width="1"/>
<polygon points="489,376 504.5,442 489,510 470,444" fill="none" stroke="#111" stroke-width="1"/>
<polygon points="489,380 502,442 489,506 473,444" fill="#1a1a1a" stroke="#111" stroke-width="1"/>
<polygon points="489,382 495,388 477,450 472,444" fill="#d5d5d5"/>
<path d="M491,386 L475,447" stroke="#f8f8f8" stroke-width="1.6"/>
<polygon points="493,400 498,424 489,494 481,458" fill="#555"/>
<path d="M487.5,421 L494,447 M484.5,467 L489,493" stroke="#fff" stroke-width="1.8"/>
<path d="M497,390 L502,442 L490,503" stroke="#e0e0e0" stroke-width="0.8" stroke-dasharray="1.2 1.2" fill="none"/>
</g>
<!-- sofa -->
<g stroke="#000" fill="none">
<polygon points="596.4,420 617,419.5 676,419 737,419.5 756.6,420 760.7,474.8 758,499.5 595.5,499.5 592.4,474.8" fill="#7a97a4" stroke-width="1.3"/>
<path d="M596,420.8 H617 M737,420.8 H757" stroke-width="2.2"/>
<path d="M596,426.4 H616 M738,426.4 H757" stroke-width="1.8"/>
<path d="M597,437.7 H617 M737,437.7 H757" stroke-width="1.2"/>
<path d="M593,474.7 H616 M738,474.7 H760" stroke-width="1.1"/>
<path d="M616.3,421 L617,491 M737.5,421 L737,491" stroke-width="1.7"/>
<path d="M618,423.4 H737" stroke-width="1.1"/>
<path d="M677,419 V492" stroke-width="2.6"/>
<path d="M618,452.7 H737" stroke-width="1.2"/>
<path d="M618,482.7 H737 M607,491 H746" stroke-width="1.1"/>
<path d="M619,439.5 H672 M682,439.5 H735" stroke-width="1" stroke-dasharray="2.5 2.5"/>
<path d="M634.7,426 V475 M657.5,426 V475 M697,426 V475 M720,426 V475" stroke-width="1.1" stroke-dasharray="5 1.5"/>
<path d="M631,457.5 H639 M654,457.5 H661 M693,457.5 H701 M716,457.5 H724 M631,471.3 H639 M654,471.3 H661 M693,471.3 H701 M716,471.3 H724" stroke-width="1.3"/>
</g>
<!-- dimension lines -->
<g stroke="#1010ff" stroke-width="1.1" fill="none">
<path d="M675.8,406 V420 M675.8,499.5 V569 M518.5,474.8 H595 M760,474.8 H854.2"/>
<path d="M672,407 H679 M672,501 L675.8,505 L679.5,501"/>
</g>
<g font-size="6" fill="#e00000" font-family="Liberation Sans"><text x="551" y="475">1983.4</text><text x="795" y="475">1983.4</text></g>
<!-- red markers -->
<g fill="none" stroke="#ff0000" stroke-width="1.9">
<path d="M478,294 L492,250 H570"/>
<path d="M804,250 H881 L884,252 L900,294"/>
<path d="M407.6,487 L373,586 H502 M373,586 L394,620"/>
<path d="M440,700 L451.3,721 H547"/>
<path d="M980.7,487 L1022.5,586 H891.4 M1022.5,586 L1000,619"/>
<path d="M944.5,700 L929.6,721 H834"/>
</g>
<circle cx="692.9" cy="251.8" r="2" fill="#e00000"/>
<path d="M450,378.6 H458 M451.5,377 L450,378.6 L451.5,380 M456.5,377 L458,378.6 L456.5,380" stroke="#e00000" stroke-width="1.3" fill="none"/>
<path d="M496,255 L499,253" stroke="#d00000" stroke-width="2"/>
<path d="M380,583 L384,580 M382,578 L384,580 L383,583" stroke="#c03000" stroke-width="1.2" fill="none"/>
<!-- axis -->
<path d="M291.3,704.6 H305" stroke="#e00000" stroke-width="1.3"/>
<path d="M304,700.5 L310,704.6 L304,708.5Z" fill="#ff0000"/>
<path d="M291.3,704.6 L297,689" stroke="#aaa" stroke-width="1.2"/>
<path d="M294,692 L298.7,686 L299,693Z" fill="#999"/>
<path d="M291.3,704.6 L286,699" stroke="#0000e0" stroke-width="1.3"/>
<path d="M283,696 L288,697 L286,701 L283,700Z" fill="#0000ff"/>
</g>
</svg>
<!-- window border -->
<div class="a" style="left:0;top:0;width:1096px;height:1px;background:#1c1c1c"></div>
<div class="a" style="left:0;top:0;width:1px;height:776px;background:#1c1c1c"></div>
<div class="a" style="left:1095px;top:0;width:1px;height:776px;background:#1c1c1c"></div>
<div class="a" style="left:0;top:775px;width:1096px;height:1px;background:#1c1c1c"></div>
</body></html>
